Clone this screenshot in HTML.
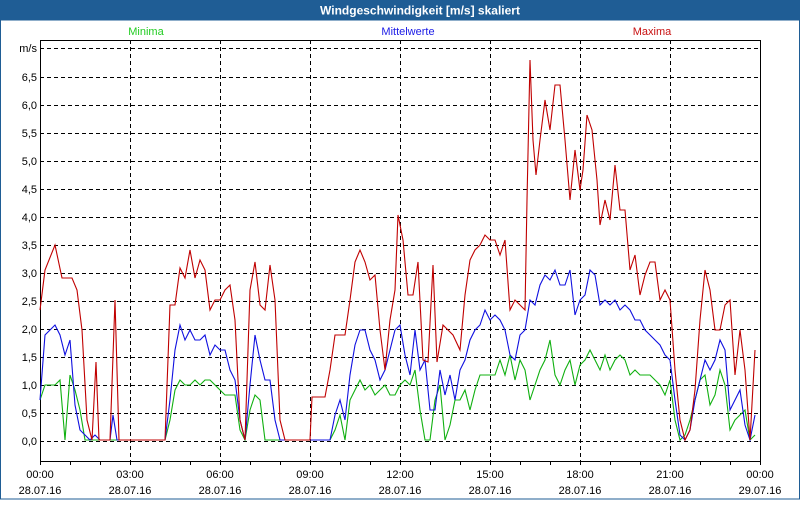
<!DOCTYPE html>
<html><head><meta charset="utf-8"><style>
html,body{margin:0;padding:0;background:#fff;}
body{width:800px;height:500px;overflow:hidden;font-family:"Liberation Sans",sans-serif;}
</style></head><body>
<svg width="800" height="500" xmlns="http://www.w3.org/2000/svg" font-family="Liberation Sans, sans-serif">
<rect x="0" y="0" width="800" height="500" fill="#fff"/>
<rect x="0" y="0" width="800" height="20" fill="#1f5d95"/>
<rect x="0.5" y="20" width="799" height="479" fill="none" stroke="#1f5d95" stroke-width="1"/>
<text x="420" y="14.5" fill="#fff" font-size="12" font-weight="bold" text-anchor="middle">Windgeschwindigkeit [m/s] skaliert</text>
<text x="146" y="35" fill="#22cc22" font-size="11" text-anchor="middle">Minima</text>
<text x="408" y="35" fill="#1a1ae6" font-size="11" text-anchor="middle">Mittelwerte</text>
<text x="652" y="35" fill="#c81010" font-size="11" text-anchor="middle">Maxima</text>
<g stroke="#000" stroke-width="1" stroke-dasharray="4,3" fill="none">
<path d="M40 48.5H760M40 77.5H760M40 105.5H760M40 133.5H760M40 161.5H760M40 189.5H760M40 217.5H760M40 245.5H760M40 273.5H760M40 301.5H760M40 329.5H760M40 357.5H760M40 385.5H760M40 413.5H760M40 441.5H760"/>
<path d="M130.5 40V461M220.5 40V461M310.5 40V461M400.5 40V461M490.5 40V461M580.5 40V461M670.5 40V461"/>
</g>
<path d="M40.5 40V461.5H760.5V40M40 40.5H760" stroke="#000" fill="none"/>
<path d="M70.5 461V465M100.5 461V465M130.5 461V465M160.5 461V465M190.5 461V465M220.5 461V465M250.5 461V465M280.5 461V465M310.5 461V465M340.5 461V465M370.5 461V465M400.5 461V465M430.5 461V465M460.5 461V465M490.5 461V465M520.5 461V465M550.5 461V465M580.5 461V465M610.5 461V465M640.5 461V465M670.5 461V465M700.5 461V465M730.5 461V465M40.5 461V465M760.5 461V465" stroke="#000"/>
<g font-size="11" fill="#000" text-anchor="end">
<text x="37" y="52">m/s</text>
<text x="37" y="81">6,5</text><text x="37" y="109">6,0</text><text x="37" y="137">5,5</text><text x="37" y="165">5,0</text><text x="37" y="193">4,5</text><text x="37" y="221">4,0</text><text x="37" y="249">3,5</text><text x="37" y="277">3,0</text><text x="37" y="305">2,5</text><text x="37" y="333">2,0</text><text x="37" y="361">1,5</text><text x="37" y="389">1,0</text><text x="37" y="417">0,5</text><text x="37" y="445">0,0</text>
</g>
<g font-size="11" fill="#000" text-anchor="middle">
<text x="40" y="478">00:00</text><text x="40" y="494">28.07.16</text>
<text x="130" y="478">03:00</text><text x="130" y="494">28.07.16</text>
<text x="220" y="478">06:00</text><text x="220" y="494">28.07.16</text>
<text x="310" y="478">09:00</text><text x="310" y="494">28.07.16</text>
<text x="400" y="478">12:00</text><text x="400" y="494">28.07.16</text>
<text x="490" y="478">15:00</text><text x="490" y="494">28.07.16</text>
<text x="580" y="478">18:00</text><text x="580" y="494">28.07.16</text>
<text x="670" y="478">21:00</text><text x="670" y="494">28.07.16</text>
<text x="760" y="478">00:00</text><text x="760" y="494">29.07.16</text>
</g>
<g fill="none" stroke-width="1.1" stroke-linejoin="miter">
<polyline stroke="#10b010" points="40,400 45,385 50,385 55,385 60,380 65,440 70,375 75,390 80,410 85,440 165,440 170,420 175,390 180,380 185,385 190,385 195,380 200,385 205,380 210,380 215,385 220,390 225,395 230,395 235,395 240,430 245,440 250,410 255,395 260,400 265,440 330,440 335,430 340,415 345,440 350,400 355,390 360,380 365,390 370,385 375,395 380,390 385,385 390,395 395,395 400,385 405,380 410,385 415,370 420,410 425,440 430,440 435,400 440,385 445,440 450,425 455,400 460,400 465,390 470,410 475,390 480,375 485,375 490,375 495,375 500,360 505,375 510,355 515,380 520,360 525,370 530,400 535,385 540,370 545,360 550,340 555,375 560,385 565,370 570,360 575,385 580,365 585,360 590,350 595,360 600,370 605,355 610,370 615,360 620,355 625,360 630,375 635,370 640,375 645,375 650,375 655,380 660,385 665,395 670,380 675,420 680,440 685,435 690,420 695,400 700,380 705,375 710,405 715,395 720,370 725,385 730,430 735,420 740,415 745,410 750,440 755,435"/>
<polyline stroke="#1010e0" points="40,400 45,335 50,330 55,325 60,335 65,355 70,340 75,405 80,430 85,435 90,440 95,435 100,440 110,440 113,415 117,440 165,440 170,400 175,350 180,325 185,340 190,330 195,340 200,340 205,335 210,355 215,345 220,350 225,350 230,370 235,380 240,420 245,440 250,385 255,335 260,360 265,380 270,380 275,420 280,440 330,440 335,415 340,400 345,420 350,375 355,345 360,330 365,330 370,350 375,360 380,380 385,370 390,350 395,330 400,325 405,355 410,375 415,330 420,370 425,360 430,410 435,410 440,370 445,395 450,375 455,400 460,370 465,360 470,340 475,330 480,325 485,310 490,320 495,315 500,320 505,330 510,355 515,360 520,335 525,330 530,300 535,305 540,285 545,275 550,280 555,270 560,285 565,285 570,270 575,315 580,300 585,295 590,270 595,275 600,305 605,300 610,305 615,300 620,310 625,305 630,310 635,320 640,320 645,330 650,335 655,340 660,345 665,355 670,360 675,400 680,435 685,440 690,430 695,400 700,380 705,360 710,370 715,360 720,340 725,350 730,410 735,400 740,390 745,425 750,440 755,415"/>
<polyline stroke="#c00000" points="40,310 45,270 55,245 62,278 72,278 77,290 82,330 87,420 92,440 96,362 99,440 110,440 115,300 119,440 165,440 170,305 175,305 180,268 185,278 190,250 195,278 200,260 205,270 210,310 215,300 220,300 225,290 230,285 235,320 240,420 245,440 250,290 255,262 260,305 265,310 270,265 275,300 280,420 285,440 310,440 312,397 325,397 330,370 335,335 345,335 350,300 355,262 360,250 365,262 370,280 375,275 380,330 385,370 390,320 395,290 398,215 403,240 408,295 413,295 418,262 423,360 428,362 433,265 437,362 443,325 448,330 453,335 460,350 465,295 470,260 475,250 480,245 485,235 490,240 495,240 500,255 505,240 510,310 515,300 525,310 527,200 530,60 533,140 536,175 540,140 545,100 550,130 555,85 560,85 565,140 570,200 575,150 580,190 583,170 587,115 592,130 597,180 600,225 605,200 610,220 615,165 620,210 625,210 630,270 635,255 640,295 645,275 650,262 655,262 660,300 665,290 670,300 675,370 680,420 685,440 690,430 695,390 700,320 705,270 710,290 715,330 720,330 725,305 730,300 735,375 740,330 745,370 750,440 755,350"/>
</g>
</svg>
</body></html>
